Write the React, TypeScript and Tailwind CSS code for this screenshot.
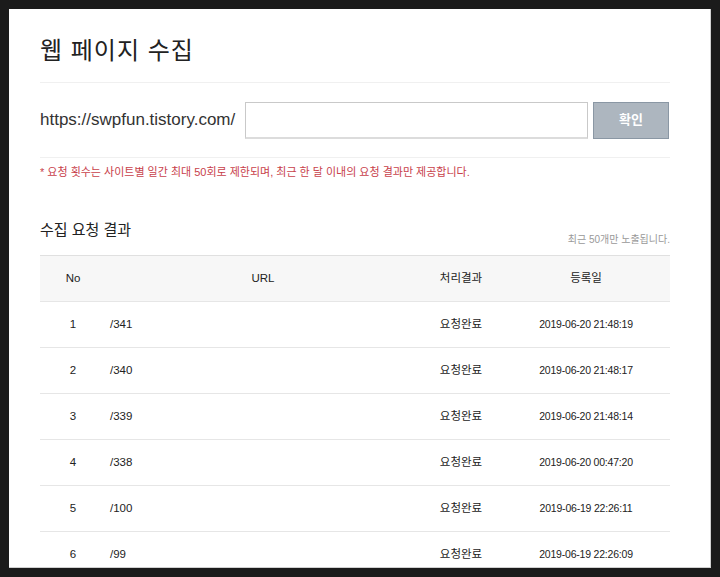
import React from 'react'

interface Row {
  no: number
  url: string
  status: string
  date: string
}

const rows: Row[] = [
  { no: 1, url: '/341', status: '요청완료', date: '2019-06-20 21:48:19' },
  { no: 2, url: '/340', status: '요청완료', date: '2019-06-20 21:48:17' },
  { no: 3, url: '/339', status: '요청완료', date: '2019-06-20 21:48:14' },
  { no: 4, url: '/338', status: '요청완료', date: '2019-06-20 00:47:20' },
  { no: 5, url: '/100', status: '요청완료', date: '2019-06-19 22:26:11' },
  { no: 6, url: '/99', status: '요청완료', date: '2019-06-19 22:26:09' },
]

const font = { fontFamily: '"Liberation Sans", "Noto Sans CJK KR", sans-serif' }

export default function App() {
  return (
    <div className="w-[720px] h-[577px] bg-[#1b1b1b] p-[9px]" style={font}>
      <div className="h-full bg-white border-r border-b border-[#d0d0d0] overflow-hidden pl-[31px] pr-[40px] pt-[26px]">
        {/* Title */}
        <h1 className="text-[24px] leading-[32px] text-[#222] tracking-[1px] pb-[15px] border-b border-[#f0f0f0]">
          웹 페이지 수집
        </h1>

        {/* URL input row */}
        <div className="flex items-center h-[75px] border-b border-[#f0f0f0]">
          <span className="text-[17px] text-[#333] w-[205px] shrink-0">https://swpfun.tistory.com/</span>
          <input
            type="text"
            className="h-[37px] w-[343px] border border-[#c9c9c9] border-b-2 border-b-[#dcdcdc] outline-none px-2"
          />
          <button className="ml-[5px] h-[37px] w-[76px] bg-[#adb6bf] border border-[#8a97a4] text-white text-[13px] font-bold">
            확인
          </button>
        </div>

        {/* Notice */}
        <p className="text-[11px] leading-[14px] text-[#c8414b] mt-[7px]">
          * 요청 횟수는 사이트별 일간 최대 50회로 제한되며, 최근 한 달 이내의 요청 결과만 제공합니다.
        </p>

        {/* Result header */}
        <div className="flex items-end justify-between mt-[41px] pb-[9px]">
          <h2 className="text-[15px] leading-[20px] text-[#222] mb-[6px]">수집 요청 결과</h2>
          <span className="text-[10px] leading-[12px] text-[#999]">최근 50개만 노출됩니다.</span>
        </div>

        {/* Table */}
        <table className="w-full border-collapse table-fixed text-[11.5px] text-[#222]">
          <colgroup>
            <col className="w-[66px]" />
            <col className="w-[314px]" />
            <col className="w-[82px]" />
            <col />
          </colgroup>
          <thead>
            <tr className="bg-[#f7f7f7] border-t border-[#e0e0e0] h-[46px]">
              <th className="font-normal text-center">No</th>
              <th className="font-normal text-center">URL</th>
              <th className="font-normal text-center">처리결과</th>
              <th className="font-normal text-center">등록일</th>
            </tr>
          </thead>
          <tbody>
            {rows.map((r) => (
              <tr key={r.no} className="border-t border-[#e6e6e6] h-[46px]">
                <td className="text-center">{r.no}</td>
                <td className="pl-[4px]">{r.url}</td>
                <td className="text-center">{r.status}</td>
                <td className="text-center text-[10.5px] tracking-[-0.2px]">{r.date}</td>
              </tr>
            ))}
          </tbody>
        </table>
      </div>
    </div>
  )
}
